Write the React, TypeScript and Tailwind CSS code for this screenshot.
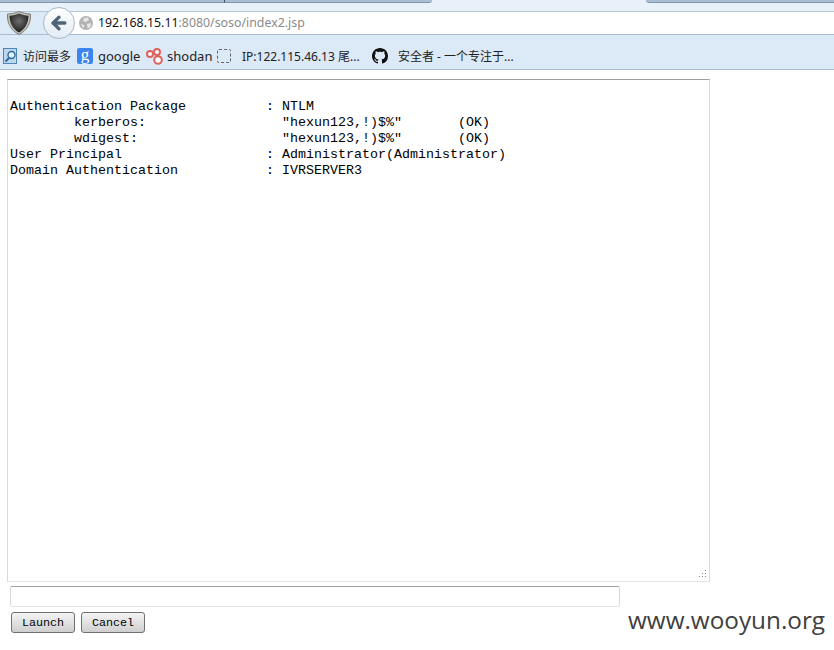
import { ArrowLeft } from "lucide-react";

const OUTPUT = `
Authentication Package          : NTLM
        kerberos:                 "hexun123,!)$%"       (OK)
        wdigest:                  "hexun123,!)$%"       (OK)
User Principal                  : Administrator(Administrator)
Domain Authentication           : IVRSERVER3`;

const CJK = '"Noto Sans", "Noto Sans CJK SC", sans-serif';

function Shield() {
  return (
    <svg width="24" height="24" viewBox="0 0 24 24">
      <defs>
        <radialGradient id="shieldFill" cx="50%" cy="40%" r="60%">
          <stop offset="0%" stopColor="#707070" />
          <stop offset="100%" stopColor="#1c1c1c" />
        </radialGradient>
      </defs>
      <path d="M12 0.500 C8 2 5 3 0.500 3 C0 11 3 19 12 23.500 C21 19 24 11 23.500 3 C19 3 16 2 12 0.500Z" fill="#c4c4b4" stroke="#7d7d7d" />
      <path d="M12 2.500 C9 3.800 6 4.500 2.500 4.800 C2.500 12 6 18.500 12 21.500 C18 18.500 21.500 12 21.500 4.800 C18 4.500 15 3.800 12 2.500Z" fill="url(#shieldFill)" />
    </svg>
  );
}

function Globe() {
  return (
    <svg width="14" height="14" viewBox="0 0 14 14">
      <circle cx="7" cy="7" r="7" fill="#b4b4b4" />
      <path d="M5 2 L9 1.500 L10 4 L7 6 L4 5Z M8 8 L12 7 L11.500 11 L8.500 12.500Z M2 8 L5 9 L5 12 L3 10.500Z" fill="#e6e6e6" />
    </svg>
  );
}

function ReaderIcon() {
  return (
    <svg width="16" height="17" viewBox="0 0 16 17">
      <rect x="0.500" y="0.500" width="13" height="15" fill="#bcd7ee" stroke="#4b86b5" />
      <circle cx="8.500" cy="7" r="3.500" fill="#e8f3fb" stroke="#2b6a9e" strokeWidth="1.400" />
      <path d="M6 10 L2.500 13.500" stroke="#2b6a9e" strokeWidth="2" />
    </svg>
  );
}

function GoogleIcon() {
  return (
    <span className="flex h-4 w-4 items-center justify-center rounded-[2px] bg-[#3d85ee] pb-[3px] text-[17px] leading-none text-white [font-family:'Liberation_Serif',serif]">
      g
    </span>
  );
}

function ShodanIcon() {
  return (
    <svg width="17" height="17" viewBox="0 0 17 17" fill="#fff" stroke="#e0605c" strokeWidth="2">
      <circle cx="4" cy="6" r="3" />
      <circle cx="11" cy="4" r="3" />
      <circle cx="12" cy="12" r="3.800" />
    </svg>
  );
}

function GithubIcon() {
  return (
    <svg width="16" height="16" viewBox="0 0 16 16" fill="#111">
      <path d="M8 0C3.580 0 0 3.580 0 8c0 3.540 2.290 6.530 5.470 7.590.4.070.55-.17.55-.38 0-.19-.01-.82-.01-1.490-2.010.37-2.530-.49-2.690-.94-.09-.23-.48-.94-.82-1.130-.28-.15-.68-.52-.01-.53.63-.01 1.080.58 1.230.82.72 1.210 1.870.87 2.330.66.070-.52.280-.87.510-1.070-1.780-.2-3.640-.89-3.640-3.950 0-.87.310-1.590.820-2.150-.08-.2-.36-1.020.08-2.120 0 0 .67-.21 2.200.82.640-.18 1.320-.27 2-.27s1.360.09 2 .27c1.530-1.040 2.200-.82 2.200-.82.440 1.100.160 1.920.080 2.120.51.560.82 1.270.82 2.150 0 3.070-1.870 3.750-3.650 3.950.29.250.54.730.54 1.480 0 1.070-.01 1.930-.01 2.200 0 .21.150.46.550.38A8.010 8.010 0 0 0 16 8c0-4.420-3.580-8-8-8z" />
    </svg>
  );
}

function Bookmark({ icon, label, className }: { icon: React.ReactNode; label: string; className: string }) {
  return (
    <div className={`flex items-center ${className}`}>
      {icon}
      <span className="whitespace-nowrap leading-none text-[#222]" style={{ fontFamily: CJK }}>
        {label}
      </span>
    </div>
  );
}

export default function App() {
  return (
    <div className="relative h-[650px] w-[834px] overflow-hidden bg-white [font-family:'Liberation_Sans',sans-serif]">
      {/* tab strip */}
      <div className="flex h-[12px] items-start border-b border-[#b5c6d8] bg-[#e8f1fa]">
        <div className="h-[3px] w-[225px] border-b border-r border-[#7f95ad] border-r-[#3f4f60] bg-[#a9bed4]" />
        <div className="h-[3px] w-[207px] rounded-br-md border-b border-[#7f95ad] bg-[#a9bed4]" />
        <div className="w-[214px]" />
        <div className="h-[3px] flex-1 rounded-bl-md border-b border-[#7f95ad] bg-[#a9bed4]" />
      </div>

      {/* address row */}
      <div className="flex h-[23px] border-b border-[#a9bbd0] bg-white">
        <div className="w-[62px] bg-[#dce9f6]" />
        <div className="flex items-center gap-[5px] pl-[17px]">
          <Globe />
          <p className="whitespace-nowrap text-[12.35px] text-[#8a8a8a]" style={{ fontFamily: '"Noto Sans", sans-serif' }}>
            <span className="text-[#111]">192.168.15.11</span>:8080/soso/index2.jsp
          </p>
        </div>
      </div>

      {/* bookmarks */}
      <div className="flex h-[35px] items-center border-b border-[#a9bbd0] bg-[#dce9f6] pl-[3px] pt-[8px]">
        <Bookmark className="w-[74px] gap-[4px] text-[12px] [&>span]:pt-[2px]" icon={<ReaderIcon />} label="访问最多" />
        <Bookmark className="w-[69px] gap-[5px] text-[13px]" icon={<GoogleIcon />} label="google" />
        <Bookmark className="w-[71px] gap-[4px] text-[13px]" icon={<ShodanIcon />} label="shodan" />
        <Bookmark
          className="w-[155px] gap-[11px] text-[12px] [&>span]:pt-[2px]"
          icon={<span className="h-[14px] w-[14px] rounded-[2px] border border-dashed border-[#666]" />}
          label="IP:122.115.46.13 尾..."
        />
        <Bookmark className="gap-[10px] text-[12px] [&>span]:pt-[2px]" icon={<GithubIcon />} label="安全者 - 一个专注于..." />
      </div>

      {/* page */}
      <div className="pl-[7px] pt-[9px]">
        <div className="relative h-[503px] w-[703px] border border-t-[#a0a0a0] border-r-[#d8d8e0] border-b-[#e4e4ec] border-l-[#d8d8e0] pl-[2px] pt-[3px]">
          <pre className="text-[13.333px] leading-[16px] text-black [font-family:'Liberation_Mono',monospace]">{OUTPUT}</pre>
          <svg className="absolute bottom-[2px] right-[2px]" width="9" height="9" viewBox="0 0 9 9" fill="#8c8c8c">
            <rect x="7" y="0" width="1" height="1" />
            <rect x="4" y="3" width="1" height="1" />
            <rect x="7" y="3" width="1" height="1" />
            <rect x="1" y="6" width="1" height="1" />
            <rect x="4" y="6" width="1" height="1" />
            <rect x="7" y="6" width="1" height="1" />
          </svg>
        </div>
        <div className="ml-[3px] mt-[4px] h-[21px] w-[610px] rounded-[2px] border border-t-[#a0a0a0] border-r-[#d8d8e0] border-b-[#e4e4ec] border-l-[#d8d8e0]" />
        <div className="ml-[4px] mt-[5px] flex items-center gap-[6px]">
          <button className="h-[21px] w-[64px] rounded-[3px] border border-[#707070] bg-gradient-to-b from-[#f4f4f4] to-[#cfcfcf] pt-[2px] text-[11.7px] leading-none text-black [font-family:'Liberation_Mono',monospace]">
            Launch
          </button>
          <button className="h-[21px] w-[64px] rounded-[3px] border border-[#707070] bg-gradient-to-b from-[#f4f4f4] to-[#cfcfcf] pt-[2px] text-[11.7px] leading-none text-black [font-family:'Liberation_Mono',monospace]">
            Cancel
          </button>
        </div>
      </div>

      {/* back button and shield over the toolbar */}
      <div className="absolute left-[7px] top-[11px]">
        <Shield />
      </div>
      <div className="absolute left-[43px] top-[7px] flex h-[32px] w-[32px] items-center justify-center rounded-full border border-[#a9b8c8] bg-gradient-to-b from-white to-[#e3ebf3]">
        <ArrowLeft size={20} strokeWidth={4} color="#4f6478" />
      </div>

      {/* watermark */}
      <div className="absolute left-[628px] top-[604px] text-[24.3px] leading-[32px] text-[#404040] [font-family:'Open_Sans',sans-serif]">
        www.wooyun.org
      </div>
    </div>
  );
}
